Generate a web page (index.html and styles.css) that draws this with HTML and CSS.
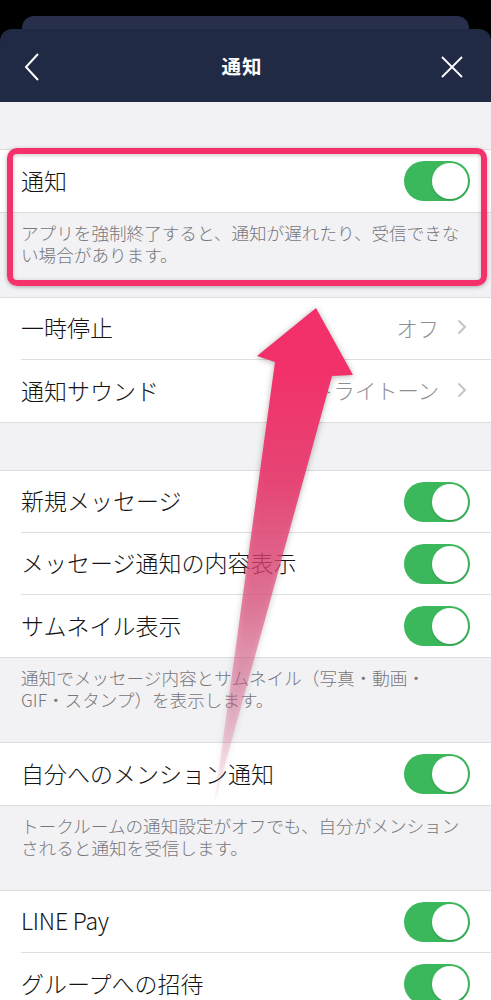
FILE: index.html
```html
<!DOCTYPE html>
<html lang="ja">
<head>
<meta charset="utf-8">
<title>通知</title>
<link rel="stylesheet" href="styles.css">
</head>
<body>
<div class="page">
  <div class="top">
    <div class="backcard"></div>
    <header class="header">
      <svg class="hicon back" width="20" height="30" viewBox="0 0 20 30"><polyline points="14,2 2,15 14,28" fill="none" stroke="#fff" stroke-width="2"/></svg>
      <h1 class="title">通知</h1>
      <svg class="hicon close" width="24" height="24" viewBox="0 0 24 24"><path d="M2 2 L22 22 M22 2 L2 22" fill="none" stroke="#fff" stroke-width="1.8"/></svg>
    </header>
  </div>

  <div class="gap"></div>

  <div class="highlight">
    <div class="group">
      <div class="row"><div class="row-body"><span class="label">通知</span><span class="toggle"></span></div></div>
    </div>
    <p class="note">アプリを強制終了すると、通知が遅れたり、受信できない場合があります。</p>
  </div>

  <div class="group">
    <div class="row"><div class="row-body link"><span class="label">一時停止</span><span class="value">オフ<svg class="chev" width="10" height="16" viewBox="0 0 10 16"><polyline points="1.5,1.5 8,8 1.5,14.5" fill="none" stroke="#c4c4c8" stroke-width="2"/></svg></span></div></div>
    <div class="row"><div class="row-body link"><span class="label">通知サウンド</span><span class="value">トライトーン<svg class="chev" width="10" height="16" viewBox="0 0 10 16"><polyline points="1.5,1.5 8,8 1.5,14.5" fill="none" stroke="#c4c4c8" stroke-width="2"/></svg></span></div></div>
  </div>

  <div class="gap"></div>

  <div class="group">
    <div class="row"><div class="row-body"><span class="label">新規メッセージ</span><span class="toggle"></span></div></div>
    <div class="row"><div class="row-body"><span class="label">メッセージ通知の内容表示</span><span class="toggle"></span></div></div>
    <div class="row"><div class="row-body"><span class="label">サムネイル表示</span><span class="toggle"></span></div></div>
  </div>
  <p class="note">通知でメッセージ内容とサムネイル（写真・動画・<br>GIF・スタンプ）を表示します。</p>

  <div class="group">
    <div class="row"><div class="row-body"><span class="label">自分へのメンション通知</span><span class="toggle"></span></div></div>
  </div>
  <p class="note">トークルームの通知設定がオフでも、自分がメンションされると通知を受信します。</p>

  <div class="group">
    <div class="row"><div class="row-body"><span class="label latin">LINE Pay</span><span class="toggle"></span></div></div>
    <div class="row"><div class="row-body"><span class="label">グループへの招待</span><span class="toggle"></span></div></div>
  </div>

  <svg class="arrow" width="491" height="1000" viewBox="0 0 491 1000">
    <defs>
      <linearGradient id="fade" gradientUnits="userSpaceOnUse" x1="0" y1="370" x2="0" y2="805">
        <stop offset="0" stop-color="#f2306a" stop-opacity="1"/>
        <stop offset="0.25" stop-color="#ea3a6e" stop-opacity="0.92"/>
        <stop offset="0.55" stop-color="#e5487a" stop-opacity="0.65"/>
        <stop offset="0.8" stop-color="#e86090" stop-opacity="0.35"/>
        <stop offset="1" stop-color="#f080a0" stop-opacity="0.08"/>
      </linearGradient>
    </defs>
    <polygon class="arrow-shape" points="316,308 353,375 332,376 214,805 275,362 257,356" fill="url(#fade)"/>
  </svg>
</div>
</body>
</html>
```

FILE: styles.css
```css
* { box-sizing: border-box; }
html, body { margin: 0; padding: 0; }
body {
  background: #f2f1f4;
  font-family: "Noto Sans CJK JP", "Noto Sans", sans-serif;
  width: 491px;
  overflow: hidden;
}
.page {
  position: relative;
  height: 1000px;
  overflow: hidden;
  background: #f2f1f4;
}
.top {
  background: #000;
  padding-top: 16px;
}
.backcard {
  height: 13px;
  margin: 0 22px;
  background: #272f4a;
  border-radius: 12px 12px 0 0;
}
.header {
  height: 73px;
  background: #212a44;
  border-radius: 12px 12px 0 0;
  display: flex;
  align-items: center;
  justify-content: space-between;
  padding: 0 27px 0 24px;
}
.title {
  margin: 0;
  color: #fff;
  font-size: 19.5px;
  font-weight: 700;
  letter-spacing: 1px;
}
.hicon { display: block; }
.back { margin-top: 2px; }
.close { margin-top: 2px; }
.gap { height: 47px; }
.group {
  background: #fff;
  border-top: 1px solid #dcdce0;
  border-bottom: 1px solid #dcdce0;
}
.row {
  padding-left: 21px;
  background: #fff;
}
.row-body {
  height: 62px;
  display: flex;
  align-items: center;
  justify-content: space-between;
  padding-right: 21px;
  border-bottom: 1px solid #e0e0e3;
}
.row:last-child .row-body { border-bottom: none; }
.row-body.link { padding-right: 24px; }
.label {
  font-size: 23px;
  font-weight: 300;
  color: #141414;
  line-height: 1;
  margin-top: -2px;
}
.label.latin { letter-spacing: -0.2px; }
.value {
  display: flex;
  align-items: center;
  font-size: 21.3px;
  font-weight: 300;
  color: #8e8e93;
  line-height: 1;
  margin-top: -2px;
}
.chev { margin-left: 18px; }
.toggle {
  position: relative;
  width: 66px;
  height: 40px;
  border-radius: 20px;
  background: #3bb85b;
  flex: none;
}
.toggle::after {
  content: "";
  position: absolute;
  right: 2px;
  top: 2px;
  width: 36px;
  height: 36px;
  border-radius: 50%;
  background: #fff;
  box-shadow: 0 1px 2px rgba(0,0,0,0.2);
}
.note {
  margin: 0;
  padding: 9px 21px 31px 21px;
  font-size: 17.6px;
  font-weight: 300;
  line-height: 22px;
  color: #77777b;
}
.highlight { position: relative; }
.highlight::after {
  content: "";
  position: absolute;
  left: 7px;
  right: 4px;
  top: -1px;
  bottom: 11px;
  border: 6px solid #f5316c;
  border-radius: 10px;
  box-shadow: 0 1px 4px rgba(0,0,0,0.3), inset 0 1px 4px rgba(0,0,0,0.22);
  pointer-events: none;
}
.arrow {
  position: absolute;
  left: 0;
  top: 0;
  pointer-events: none;
}
.arrow-shape {
  filter: drop-shadow(0 1px 3px rgba(0,0,0,0.3));
}
```
